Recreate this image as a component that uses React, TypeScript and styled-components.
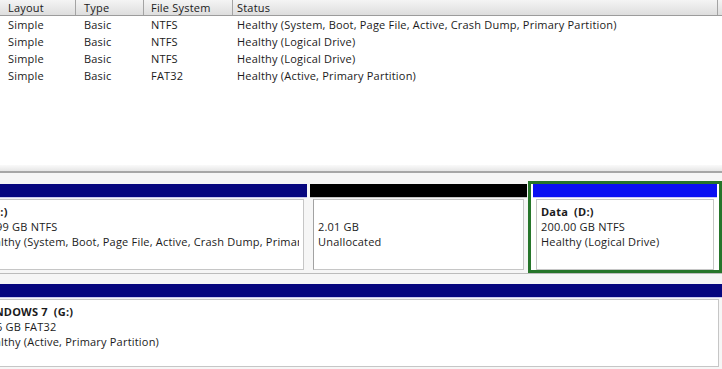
import React from 'react';
import styled, { createGlobalStyle } from 'styled-components';

const GlobalStyle = createGlobalStyle`
  html, body {
    margin: 0;
    padding: 0;
    background: #ffffff;
  }
  body {
    width: 722px;
    height: 369px;
    overflow: hidden;
    font-family: 'Open Sans', 'Noto Sans', sans-serif;
    font-size: 11px;
    letter-spacing: 0.2px;
    color: #1b1b1b;
  }
`;

const columns = [
  { title: 'Layout', width: 76, pad: 8 },
  { title: 'Type', width: 68, pad: 8 },
  { title: 'File System', width: 89, pad: 7 },
  { title: 'Status', width: 485, pad: 4 },
];

const template = `${columns.map((c) => `${c.width}px`).join(' ')} 1fr`;

const volumes = [
  ['Simple', 'Basic', 'NTFS', 'Healthy (System, Boot, Page File, Active, Crash Dump, Primary Partition)'],
  ['Simple', 'Basic', 'NTFS', 'Healthy (Logical Drive)'],
  ['Simple', 'Basic', 'NTFS', 'Healthy (Logical Drive)'],
  ['Simple', 'Basic', 'FAT32', 'Healthy (Active, Primary Partition)'],
];

const Screen = styled.div`
  width: 722px;
  height: 369px;
  display: flex;
  flex-direction: column;
  overflow: hidden;
`;

const ListPanel = styled.section`
  height: 165px;
  flex-shrink: 0;
  background: #ffffff;
`;

const HeaderBar = styled.div`
  display: grid;
  grid-template-columns: ${template};
  height: 16px;
  box-sizing: border-box;
  background: linear-gradient(#f4f4f4, #dedede);
  border-bottom: 1px solid #9c9c9c;
`;

const HeaderCell = styled.div<{ $pad: number }>`
  padding-left: ${({ $pad }) => $pad}px;
  border-right: 1px solid #a4a4a4;
  line-height: 15px;
  color: #202020;
  white-space: nowrap;
`;

const Row = styled.div`
  display: grid;
  grid-template-columns: ${template};
  height: 17px;
  line-height: 17px;
`;

const Cell = styled.div<{ $pad: number }>`
  padding-left: ${({ $pad }) => $pad}px;
  white-space: nowrap;
`;

const Splitter = styled.div`
  height: 6px;
  flex-shrink: 0;
  background: linear-gradient(#fafafa, #e6e6e6);
  border-bottom: 2px solid #a6a6a6;
`;

const DiskView = styled.section`
  flex: 1;
  background: #f6f6f6;
  overflow: hidden;
`;

const DiskRow = styled.div<{ $top: number; $divider?: boolean }>`
  padding-top: ${({ $top }) => $top}px;
  border-bottom: ${({ $divider }) => ($divider ? '1px solid #bcbcbc' : 'none')};
  overflow: hidden;
`;

/* the graphical view is scrolled right a little, so the disk labels are out of view */
const Track = styled.div`
  display: flex;
  gap: 3px;
  margin-left: -28px;
  align-items: flex-start;
`;

const Partition = styled.div<{ $width?: number; $selected?: boolean }>`
  flex: ${({ $width }) => ($width ? `0 0 ${$width}px` : '1 1 auto')};
  min-width: 0;
  box-sizing: border-box;
  ${({ $selected }) =>
    $selected
      ? `
    margin: -3px 0 0 -2px;
    border: 3px solid #26752a;
    padding: 0 2px;
    background: #ffffff;
  `
      : ''}
`;

const Bar = styled.div<{ $color: string; $shade: string }>`
  height: 13px;
  background: ${({ $color }) => $color};
  box-shadow: 0 1px 0 ${({ $shade }) => $shade};
`;

const Body = styled.div<{ $height: number; $edge?: boolean }>`
  margin: 2px 3px 0;
  height: ${({ $height }) => $height}px;
  box-sizing: border-box;
  background: #ffffff;
  border: 1px solid #c6c6c6;
  border-left-color: ${({ $edge }) => ($edge ? '#a2a2a2' : '#c6c6c6')};
  padding: 4px 4px 0;
  overflow: hidden;
`;

const Line = styled.div<{ $bold?: boolean }>`
  line-height: 15px;
  height: 15px;
  white-space: pre;
  overflow: hidden;
  font-weight: ${({ $bold }) => ($bold ? 700 : 400)};
`;

type PartitionInfo = {
  name: string;
  size: string;
  status: string;
  color: string;
  shade: string;
  width?: number;
  selected?: boolean;
};

const diskOne: PartitionInfo[] = [
  {
    name: '   (C:)',
    size: '79.99 GB NTFS',
    status: 'Healthy (System, Boot, Page File, Active, Crash Dump, Primary Partition)',
    color: '#07077f',
    shade: '#c9c9ec',
    width: 335,
  },
  {
    name: '',
    size: '2.01 GB',
    status: 'Unallocated',
    color: '#000000',
    shade: '#c4c4c4',
    width: 217,
  },
  {
    name: 'Data  (D:)',
    size: '200.00 GB NTFS',
    status: 'Healthy (Logical Drive)',
    color: '#0a10f2',
    shade: '#c9c9f4',
    selected: true,
  },
];

const diskTwo: PartitionInfo = {
  name: 'WINDOWS 7  (G:)',
  size: '14.6 GB FAT32',
  status: 'Healthy (Active, Primary Partition)',
  color: '#07077f',
  shade: '#c9c9ec',
};

const PartitionBlock = ({ p, height }: { p: PartitionInfo; height: number }) => (
  <Partition $width={p.width} $selected={p.selected}>
    <Bar $color={p.color} $shade={p.shade} />
    <Body $height={height} $edge={!p.name}>
      <Line $bold>{p.name || '\u00a0'}</Line>
      <Line>{p.size}</Line>
      <Line>{p.status}</Line>
    </Body>
  </Partition>
);

const App = () => (
  <>
    <GlobalStyle />
    <Screen>
      <ListPanel>
        <HeaderBar>
          {columns.map((c) => (
            <HeaderCell key={c.title} $pad={c.pad}>
              {c.title}
            </HeaderCell>
          ))}
          <div />
        </HeaderBar>
        {volumes.map((v, i) => (
          <Row key={i}>
            {v.map((text, j) => (
              <Cell key={j} $pad={columns[j].pad}>
                {text}
              </Cell>
            ))}
          </Row>
        ))}
      </ListPanel>
      <Splitter />
      <DiskView>
        <DiskRow $top={11} $divider>
          <Track>
            {diskOne.map((p) => (
              <PartitionBlock key={p.status + p.size} p={p} height={71} />
            ))}
          </Track>
        </DiskRow>
        <DiskRow $top={10}>
          <Track>
            <PartitionBlock p={diskTwo} height={68} />
          </Track>
        </DiskRow>
      </DiskView>
    </Screen>
  </>
);

export default App;
